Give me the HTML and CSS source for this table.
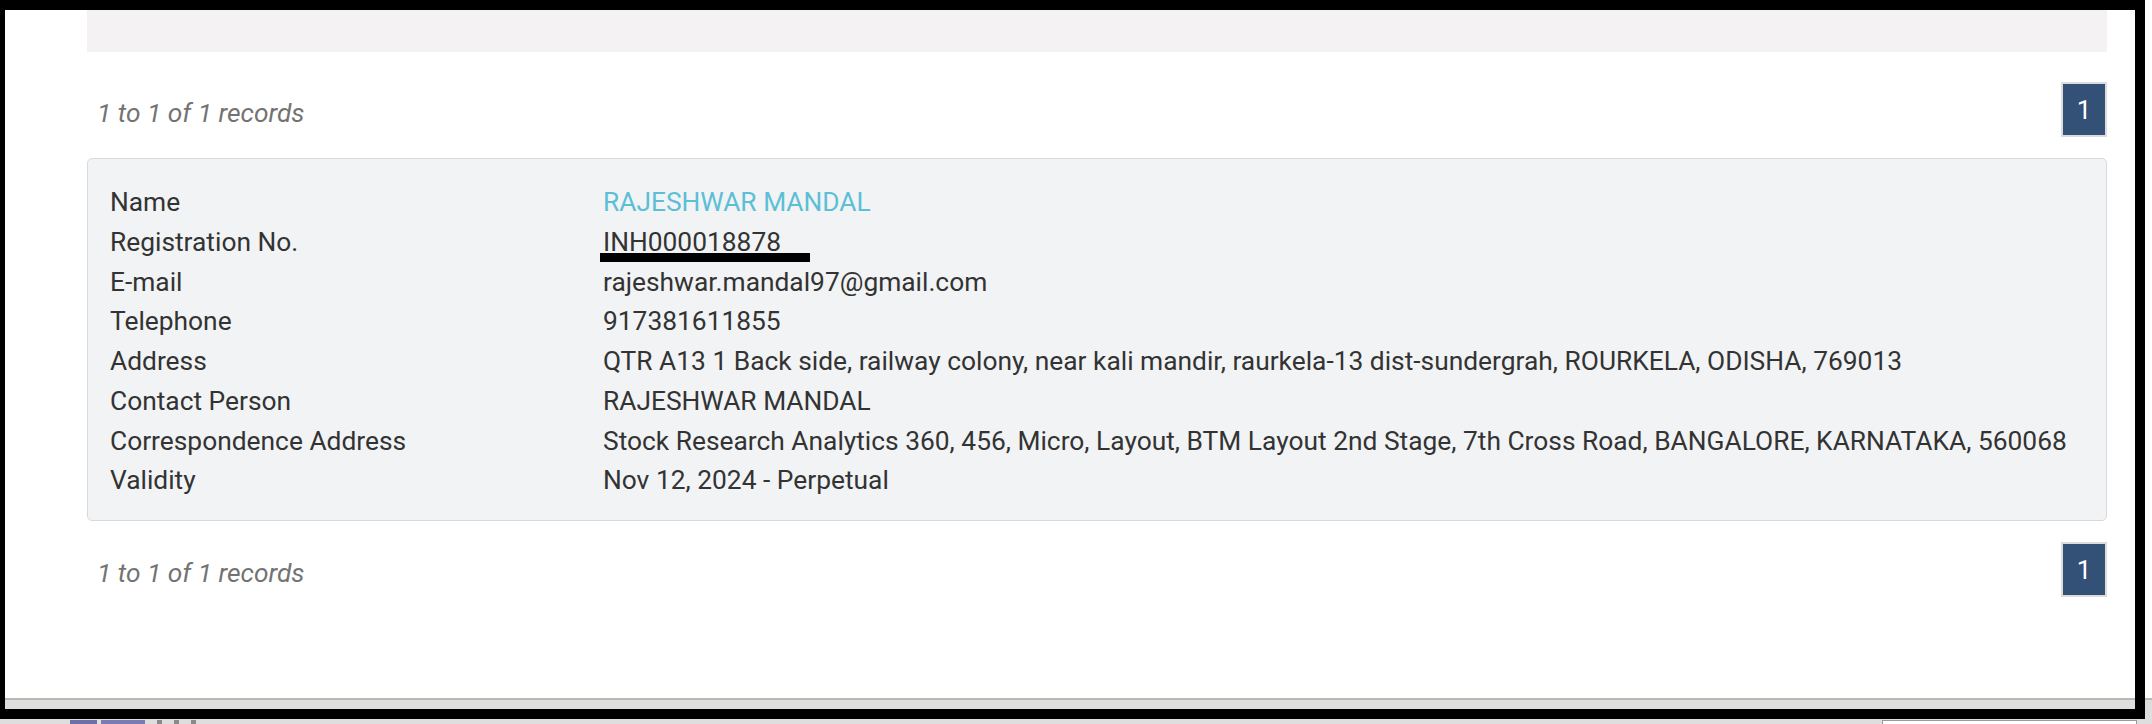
FILE: index.html
```html
<!DOCTYPE html>
<html lang="en">
<head>
<meta charset="utf-8">
<title>Registration details</title>
<link rel="stylesheet" href="styles.css">
</head>
<body>
<div class="screen">
  <div class="frame-row">
    <div class="frame">
      <div class="page">
        <div class="topbox"></div>
        <div class="pager-row">
          <span class="info">1 to 1 of 1 records</span>
          <span class="page-btn">1</span>
        </div>
        <div class="card">
          <div class="row"><span class="label">Name</span><span class="value name">RAJESHWAR MANDAL</span></div>
          <div class="row"><span class="label">Registration No.</span><span class="value"><span class="redacted">INH000018878</span></span></div>
          <div class="row"><span class="label">E-mail</span><span class="value">rajeshwar.mandal97@gmail.com</span></div>
          <div class="row"><span class="label">Telephone</span><span class="value">917381611855</span></div>
          <div class="row"><span class="label">Address</span><span class="value">QTR A13 1 Back side, railway colony, near kali mandir, raurkela-13 dist-sundergrah, ROURKELA, ODISHA, 769013</span></div>
          <div class="row"><span class="label">Contact Person</span><span class="value">RAJESHWAR MANDAL</span></div>
          <div class="row"><span class="label">Correspondence Address</span><span class="value">Stock Research Analytics 360, 456, Micro, Layout, BTM Layout 2nd Stage, 7th Cross Road, BANGALORE, KARNATAKA, 560068</span></div>
          <div class="row"><span class="label">Validity</span><span class="value">Nov 12, 2024 - Perpetual</span></div>
        </div>
        <div class="pager-row second">
          <span class="info">1 to 1 of 1 records</span>
          <span class="page-btn">1</span>
        </div>
      </div>
      <div class="rule"></div>
      <div class="band"></div>
    </div>
    <div class="outside">
      <div class="outside-top"></div>
      <div class="outside-rule"></div>
      <div class="outside-band"></div>
    </div>
  </div>
  <div class="taskbar">
    <span class="tb-icon a"></span>
    <span class="tb-icon b"></span>
    <span class="tb-dot"></span>
    <span class="tb-dot"></span>
    <span class="tb-dot"></span>
    <span class="tb-spacer"></span>
    <span class="tb-box"></span>
  </div>
</div>
</body>
</html>
```

FILE: styles.css
```css
* { box-sizing: border-box; }

html, body {
  margin: 0;
  padding: 0;
  background: #ffffff;
  overflow: hidden;
}

body {
  width: 2152px;
  height: 724px;
  font-family: Roboto, "Helvetica Neue", Arial, sans-serif;
  color: #333333;
}

.screen {
  display: flex;
  flex-direction: column;
  width: 2152px;
  height: 724px;
}

.frame-row {
  display: flex;
  height: 719px;
}

.frame {
  width: 2145px;
  height: 719px;
  border-style: solid;
  border-color: #000000;
  border-width: 10px 10px 10px 5px;
  display: flex;
  flex-direction: column;
}

.page {
  height: 688px;
  background: #ffffff;
  padding: 0 28px 0 82px;
}

.rule {
  height: 2px;
  background: #b9b9b2;
}

.band {
  height: 9px;
  background: #dedede;
}

.outside {
  width: 7px;
  display: flex;
  flex-direction: column;
}

.outside-top {
  height: 698px;
  background: #ffffff;
}

.outside-rule {
  height: 2px;
  background: #b9b9b2;
}

.outside-band {
  flex: 1;
  background: #dedede;
}

.topbox {
  height: 42px;
  background: #f4f2f2;
}

.pager-row {
  display: flex;
  justify-content: space-between;
  align-items: center;
  margin-top: 30px;
  height: 55px;
  padding-left: 10px;
}

.pager-row.second {
  margin-top: 21px;
}

.info {
  font-style: italic;
  font-size: 26.35px;
  color: #737373;
  padding-top: 6px;
}

.page-btn {
  width: 46px;
  height: 55px;
  border: 2px solid #dcdcdc;
  background: #335076;
  color: #ffffff;
  font-size: 26px;
  display: flex;
  align-items: center;
  justify-content: center;
}

.card {
  margin-top: 21px;
  border: 1px solid #d9d9d9;
  border-radius: 5px;
  background: #f2f3f5;
  padding: 24px 22px 19px 22px;
}

.row {
  display: grid;
  grid-template-columns: 493px 1fr;
  font-size: 26.35px;
  line-height: 39.75px;
  color: #333333;
}

.value.name {
  color: #5bbfd5;
}

.redacted {
  position: relative;
}

.redacted::after {
  content: "";
  position: absolute;
  left: -3px;
  top: 26px;
  width: 210px;
  height: 9px;
  background: #000000;
}

.taskbar {
  height: 5px;
  background: #dedede;
  display: flex;
  align-items: flex-start;
  padding-left: 70px;
  gap: 4px;
}

.tb-icon {
  height: 5px;
  margin-top: 1px;
  background: #6f6fa8;
}

.tb-icon.a { width: 27px; }
.tb-icon.b { width: 44px; background: #7b7bb4; }

.tb-dot {
  width: 5px;
  height: 4px;
  margin-top: 1px;
  margin-left: 8px;
  background: #8a8a8a;
}

.tb-spacer { flex: 1; }

.tb-box {
  width: 255px;
  height: 5px;
  margin-top: 1px;
  margin-right: 15px;
  border: 1px solid #9a9a9a;
  border-bottom: none;
  background: #ffffff;
}
```
